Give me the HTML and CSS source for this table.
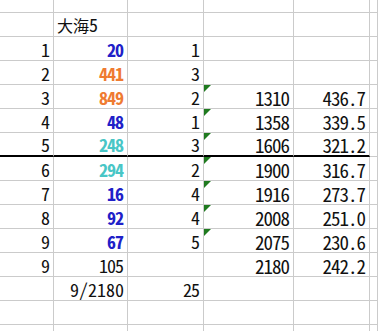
FILE: index.html
```html
<!DOCTYPE html>
<html lang="ja">
<head>
<meta charset="utf-8">
<link rel="stylesheet" href="styles.css">
</head>
<body>
<table class="sheet">
  <colgroup><col class="ca"><col class="cb"><col class="cc"><col class="cd"><col class="ce"><col class="cf"></colgroup>
  <tr class="r0"><td></td><td></td><td></td><td></td><td></td><td></td></tr>
  <tr><td></td><td class="l"><span class="cjk">大海</span>5</td><td></td><td></td><td></td><td></td></tr>
  <tr><td>1</td><td class="b blue">20</td><td>1</td><td></td><td></td><td></td></tr>
  <tr><td>2</td><td class="b orange">441</td><td>3</td><td></td><td></td><td></td></tr>
  <tr><td>3</td><td class="b orange">849</td><td>2</td><td class="m flag">1310</td><td class="m">436.7</td><td></td></tr>
  <tr><td>4</td><td class="b blue">48</td><td>1</td><td class="m flag">1358</td><td class="m">339.5</td><td></td></tr>
  <tr class="thick"><td>5</td><td class="b cyan">248</td><td>3</td><td class="m flag">1606</td><td class="m">321.2</td><td class="nothick"></td></tr>
  <tr><td>6</td><td class="b cyan">294</td><td>2</td><td class="m flag">1900</td><td class="m">316.7</td><td></td></tr>
  <tr><td>7</td><td class="b blue">16</td><td>4</td><td class="m flag">1916</td><td class="m">273.7</td><td></td></tr>
  <tr><td>8</td><td class="b blue">92</td><td>4</td><td class="m flag">2008</td><td class="m">251.0</td><td></td></tr>
  <tr><td>9</td><td class="b blue">67</td><td>5</td><td class="m flag">2075</td><td class="m">230.6</td><td></td></tr>
  <tr><td>9</td><td>105</td><td></td><td class="m">2180</td><td class="m">242.2</td><td></td></tr>
  <tr><td></td><td class="wide">9/2180</td><td>25</td><td></td><td></td><td></td></tr>
  <tr><td></td><td></td><td></td><td></td><td></td><td></td></tr>
  <tr class="rl"><td></td><td></td><td></td><td></td><td></td><td></td></tr>
</table>
</body>
</html>
```

FILE: styles.css
```css
html, body {
  margin: 0;
  padding: 0;
  background: #ffffff;
  overflow: hidden;
}
.sheet {
  table-layout: fixed;
  border-collapse: separate;
  border-spacing: 0;
  width: 378px;
  font-family: "Noto Sans CJK JP", "DejaVu Sans", sans-serif;
  font-feature-settings: "hwid" 1;
  font-size: 18px;
  letter-spacing: -1px;
  color: #111;
}
.ca { width: 54px; }
.cb { width: 74px; }
.cc { width: 76px; }
.cd { width: 90px; }
.ce { width: 76px; }
.cf { width: 8px; }
td {
  box-sizing: border-box;
  height: 24px;
  border-right: 1px solid #cbcbcb;
  border-bottom: 1px solid #cbcbcb;
  padding: 0 4px 2px 2px;
  text-align: right;
  vertical-align: bottom;
  line-height: 17px;
  white-space: nowrap;
  position: relative;
}
.r0 td { height: 13px; }
.rl td { height: 6px; border-bottom: 0; }
.l { text-align: left; padding-left: 3px; }
.cjk {
  font-size: 16px;
  letter-spacing: 0;
}
.wide { letter-spacing: 0; padding-right: 3px; }
.b { font-weight: bold; }
.blue { color: #2020c8; }
.orange { color: #ef7b31; }
.cyan { color: #48c6c6; }
.m {
  font-size: 19px;
  letter-spacing: -1px;
  line-height: 16px;
  padding-right: 4px;
  padding-bottom: 2px;
}
.thick td {
  border-bottom: 2px solid #000;
}
.thick td.nothick {
  border-bottom: 1px solid #cbcbcb;
}
.flag::before {
  content: "";
  position: absolute;
  left: 0;
  top: 0;
  width: 0;
  height: 0;
  border-top: 7px solid #1f7a1f;
  border-right: 7px solid transparent;
}
```
